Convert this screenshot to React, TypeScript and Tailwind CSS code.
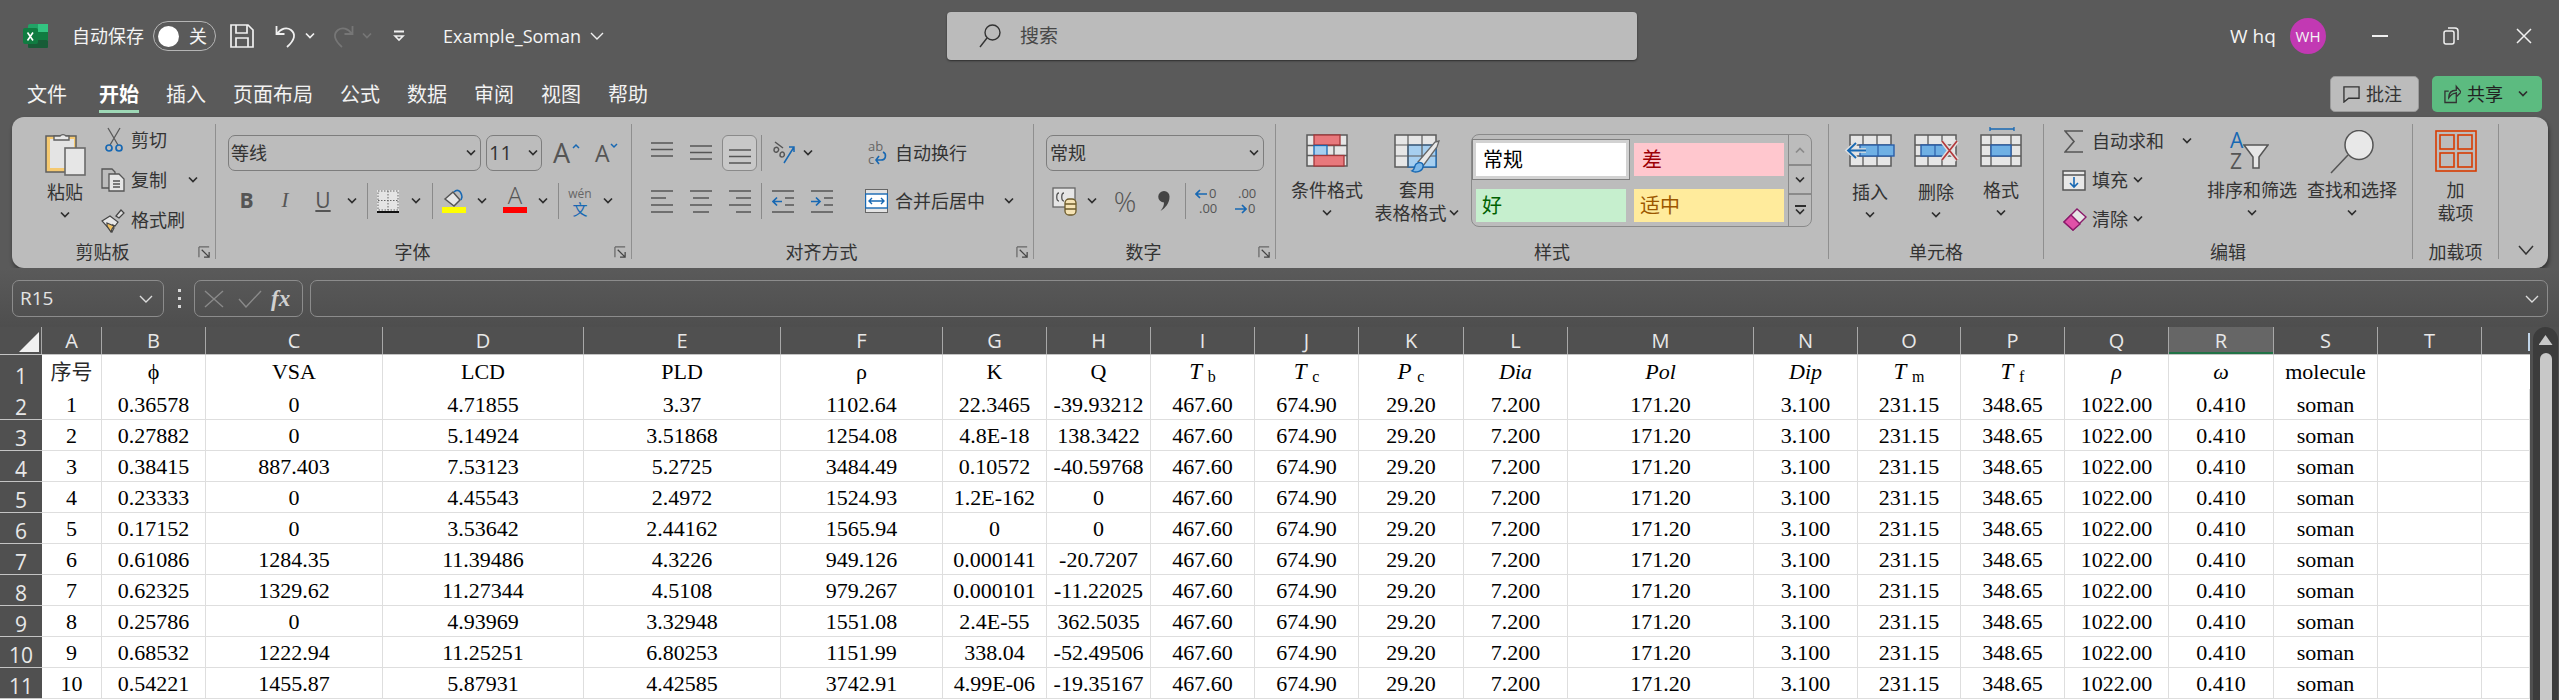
import type { ReactNode } from "react";

const cjk = "[font-family:'Noto_Sans','Noto_Sans_CJK_SC',sans-serif]";

const rows = [
  ["1", "0.36578", "0", "4.71855", "3.37", "1102.64", "22.3465", "-39.93212"],
  ["2", "0.27882", "0", "5.14924", "3.51868", "1254.08", "4.8E-18", "138.3422"],
  ["3", "0.38415", "887.403", "7.53123", "5.2725", "3484.49", "0.10572", "-40.59768"],
  ["4", "0.23333", "0", "4.45543", "2.4972", "1524.93", "1.2E-162", "0"],
  ["5", "0.17152", "0", "3.53642", "2.44162", "1565.94", "0", "0"],
  ["6", "0.61086", "1284.35", "11.39486", "4.3226", "949.126", "0.000141", "-20.7207"],
  ["7", "0.62325", "1329.62", "11.27344", "4.5108", "979.267", "0.000101", "-11.22025"],
  ["8", "0.25786", "0", "4.93969", "3.32948", "1551.08", "2.4E-55", "362.5035"],
  ["9", "0.68532", "1222.94", "11.25251", "6.80253", "1151.99", "338.04", "-52.49506"],
  ["10", "0.54221", "1455.87", "5.87931", "4.42585", "3742.91", "4.99E-06", "-19.35167"],
];
const fixedTail = ["467.60", "674.90", "29.20", "7.200", "171.20", "3.100", "231.15", "348.65", "1022.00", "0.410", "soman", "", ""];
const letters = "ABCDEFGHIJKLMNOPQRST".split("");

const gridCols =
  "grid grid-cols-[42px_60px_104px_177px_201px_197px_162px_104px_104px_104px_104px_105px_104px_186px_104px_103px_104px_104px_105px_104px_104px_48px]";

function Chev({ className = "" }: { className?: string }) {
  return (
    <svg viewBox="0 0 12 8" className={`w-[12px] h-[8px] shrink-0 ${className}`} fill="none" stroke="#2e2e2e" strokeWidth="1.7">
      <path d="M2 1.5 6 5.5 10 1.5" />
    </svg>
  );
}

function Sep({ className = "" }: { className?: string }) {
  return <div className={`w-px h-[36px] bg-[#8a8a8a] shrink-0 ${className}`} />;
}

function Group({ w, label, expander, children }: { w: string; label: string; expander?: boolean; children: ReactNode }) {
  return (
    <div className={`${w} h-[135px] border-r border-[#8f8f8f] flex flex-col shrink-0`}>
      <div className="h-[121px] flex">{children}</div>
      <div className="h-[14px] flex items-center">
        <span className="flex-1 text-center text-[18px] leading-[14px] text-[#333] whitespace-nowrap">{label}</span>
        {expander && (
          <span className="w-[22px] flex justify-center">
            <svg viewBox="0 0 14 14" className="w-[13px] h-[13px]" fill="none" stroke="#444" strokeWidth="1.3">
              <path d="M1 1h11M1 1v11" stroke="#666" />
              <path d="M4 4l8 8M12 6.5V12H6.5" />
            </svg>
          </span>
        )}
      </div>
    </div>
  );
}

function SmallBtn({ icon, label, chev }: { icon: ReactNode; label: string; chev?: string }) {
  return (
    <div className="h-[32px] flex items-center">
      <div className="w-[30px] flex">{icon}</div>
      <span className="text-[18px] text-[#333] whitespace-nowrap">{label}</span>
      {chev && <Chev className={chev} />}
    </div>
  );
}

function BigBtn({ w, slot, icon, line1, line2 }: { w: string; slot: string; icon: ReactNode; line1: string; line2?: ReactNode }) {
  return (
    <div className={`${w} shrink-0 flex flex-col items-center`}>
      <div className={`${slot} flex justify-center items-start`}>{icon}</div>
      <div className="h-[24px] leading-[24px] text-[18px] text-[#333] whitespace-nowrap">{line1}</div>
      <div className="h-[22px] flex items-center justify-center text-[18px] text-[#333] whitespace-nowrap">
        {line2 ? line2 : <Chev />}
      </div>
    </div>
  );
}

function TableGrid({ children }: { children?: ReactNode }) {
  return (
    <svg viewBox="0 0 42 33" width={42} height={33} className="shrink-0 overflow-visible">
      <rect x="1" y="1" width="40" height="31" fill="#e6e6e6" stroke="#5a5a5a" strokeWidth="1.5" />
      <path d="M15 1v31M28 1v31M1 11.5h40M1 21.5h40" stroke="#5a5a5a" strokeWidth="1.3" />
      {children}
    </svg>
  );
}

function AlignIcon({ kind }: { kind: string }) {
  const paths: Record<string, string> = {
    top: "M0 2h22M0 8.5h22M0 15h22",
    mid: "M0 5h22M0 11.5h22M0 18h22",
    bot: "M0 9h22M0 15.5h22M0 22h22",
    left: "M0 2h22M0 9h15M0 16h22M0 23h22",
    center: "M0 2h22M3 9h16M0 16h22M3 23h16",
    right: "M0 2h22M7 9h15M0 16h22M7 23h15",
  };
  return (
    <svg viewBox="0 0 22 25" className="w-[22px] h-[25px] shrink-0" fill="none" stroke="#555" strokeWidth="1.7">
      <path d={paths[kind]} />
    </svg>
  );
}

function IndentIcon({ dir }: { dir: "in" | "out" }) {
  return (
    <svg viewBox="0 0 22 25" className="w-[22px] h-[25px] shrink-0" fill="none" strokeWidth="1.7">
      <path d="M0 2h22M0 23h22M13 9h9M13 16h9" stroke="#555" />
      <path d={dir === "out" ? "M10 12.5H1M5 8.5l-4 4 4 4" : "M0 12.5h9M5 8.5l4 4-4 4"} stroke="#1768b3" />
    </svg>
  );
}

function Sub({ a, b }: { a: string; b: string }) {
  return (
    <div className="border-r border-b border-[#dedede] whitespace-nowrap text-[23px]">
      <i>{a}</i> <span className="text-[16px] align-[-3px]">{b}</span>
    </div>
  );
}

export default function App() {
  return (
    <div className={`w-[2559px] h-[700px] overflow-hidden flex flex-col bg-[#5a5a5a] ${cjk}`}>
      {/* title bar */}
      <div className="h-[72px] flex items-center shrink-0 text-[#f4f4f4] text-[18px]">
        <svg viewBox="0 0 25 24" className="w-[25px] h-[24px] ml-[23px] shrink-0">
          <rect x="5" y="0" width="20" height="24" rx="2" fill="#21a366" />
          <rect x="15" y="0" width="10" height="8" fill="#33c481" />
          <rect x="15" y="8" width="10" height="8" fill="#107c41" />
          <rect x="5" y="16" width="20" height="8" rx="1" fill="#185c37" />
          <rect x="0" y="4" width="15" height="16" rx="2" fill="#107c41" />
          <path d="M4.5 8.5l5.5 8M10 8.5l-5.5 8" stroke="#fff" strokeWidth="1.6" />
        </svg>
        <span className="ml-[24px] w-[81px] whitespace-nowrap">自动保存</span>
        <div className="w-[63px] h-[30px] rounded-full border border-[#b5b5b5] flex items-center pl-[4px]">
          <div className="w-[21px] h-[21px] rounded-full bg-white" />
          <span className="ml-[10px]">关</span>
        </div>
        <svg viewBox="0 0 24 24" className="ml-[14px] w-[24px] h-[24px] shrink-0" fill="none" stroke="#f0f0f0" strokeWidth="1.7">
          <path d="M1 1h17l5 5v17H1zM6 1v8h11V1M6 23v-9h12v9" />
        </svg>
        <svg viewBox="0 0 22 24" className="ml-[21px] w-[22px] h-[24px] shrink-0" fill="none" stroke="#f0f0f0" strokeWidth="1.8">
          <path d="M1.5 2v8h8M2 10C6 4 12 3 16 6c5 4 4 10-4 17" />
        </svg>
        <Chev className="ml-[7px] [&>path]:stroke-[#f0f0f0]" />
        <svg viewBox="0 0 22 24" className="ml-[16px] w-[22px] h-[24px] shrink-0" fill="none" stroke="#767676" strokeWidth="1.8">
          <path d="M20.5 2v8h-8M20 10C16 4 10 3 6 6c-5 4-4 10 4 17" />
        </svg>
        <Chev className="ml-[7px] [&>path]:stroke-[#767676]" />
        <svg viewBox="0 0 12 12" className="ml-[20px] w-[12px] h-[12px] shrink-0" fill="none" stroke="#f0f0f0" strokeWidth="1.6">
          <path d="M1 1.5h10" strokeWidth="2" />
          <path d="M2 6l4 4 4-4z" />
        </svg>
        <span className="ml-[38px] w-[147px] text-[18px] whitespace-nowrap [font-family:'Open_Sans',sans-serif]">Example_Soman</span>
        <svg viewBox="0 0 14 8" className="w-[14px] h-[8px] shrink-0" fill="none" stroke="#f0f0f0" strokeWidth="1.4">
          <path d="M1 1l6 6 6-6" />
        </svg>
        {/* search */}
        <div className="ml-[343px] w-[690px] h-[48px] rounded-[4px] bg-[#bbbbbb] shadow-[0_1px_2px_rgba(0,0,0,0.5)] flex items-center pl-[32px] text-[#484848] text-[19px]">
          <svg viewBox="0 0 22 24" className="w-[22px] h-[24px] shrink-0" fill="none" stroke="#333" strokeWidth="1.4">
            <circle cx="13.5" cy="8.5" r="7.5" />
            <path d="M8 14 1 23" />
          </svg>
          <span className="ml-[19px]">搜索</span>
        </div>
        <span className="ml-[593px] w-[60px] whitespace-nowrap text-[19px] [font-family:'Open_Sans',sans-serif]">W hq</span>
        <div className="w-[36px] h-[36px] rounded-full bg-[#c239b3] flex items-center justify-center text-[15px] text-[#f5f5f5] [font-family:'Open_Sans',sans-serif]">WH</div>
        <div className="ml-[46px] w-[16px] h-[2px] bg-[#f0f0f0]" />
        <svg viewBox="0 0 16 18" className="ml-[55px] w-[16px] h-[18px] shrink-0" fill="none" stroke="#f0f0f0" strokeWidth="1.5">
          <rect x="1" y="4" width="10" height="13" rx="2" />
          <path d="M5 1h7a3 3 0 0 1 3 3v9" />
        </svg>
        <svg viewBox="0 0 16 16" className="ml-[57px] w-[16px] h-[16px] shrink-0" fill="none" stroke="#f0f0f0" strokeWidth="1.5">
          <path d="M1 1l14 14M15 1 1 15" />
        </svg>
      </div>

      {/* tabs */}
      <div className="h-[45px] shrink-0 flex text-[#f2f2f2] text-[20px]">
        <div className="flex items-start pl-[27px] gap-[27px] pt-[9px] leading-[28px] whitespace-nowrap">
          <span>文件</span>
          <span className="ml-[5px] h-[29px] font-bold border-b-[3px] border-[#9ed8b6] text-white box-content">开始</span>
          <span>插入</span>
          <span>页面布局</span>
          <span>公式</span>
          <span>数据</span>
          <span>审阅</span>
          <span>视图</span>
          <span>帮助</span>
        </div>
        <div className="ml-auto flex items-start pt-[4px] pr-[17px] gap-[13px] text-[18px] text-[#333]">
          <div className="w-[89px] h-[36px] rounded-[5px] bg-[#bcbcbc] border border-[#9a9a9a] flex items-center pl-[12px]">
            <svg viewBox="0 0 18 18" className="w-[17px] h-[17px] shrink-0" fill="none" stroke="#333" strokeWidth="1.4">
              <path d="M1 1h16v12H6l-5 4z" />
            </svg>
            <span className="ml-[6px]">批注</span>
          </div>
          <div className="w-[110px] h-[36px] rounded-[5px] bg-[#5cbb80] flex items-center pl-[12px] text-[#222]">
            <svg viewBox="0 0 18 20" className="w-[17px] h-[20px] shrink-0" fill="none" stroke="#333" strokeWidth="1.4">
              <path d="M13 8v11H1V7h4M5 14c0-5 3-8 8-8V2l5 6-5 5V9c-4 0-6 2-8 5z" />
            </svg>
            <span className="ml-[6px]">共享</span>
            <Chev className="ml-[14px]" />
          </div>
        </div>
      </div>

      {/* ribbon */}
      <div className="ml-[12px] w-[2536px] h-[151px] shrink-0 rounded-[12px] bg-[#bcbcbc] shadow-[1px_3px_4px_rgba(0,0,0,0.45)] flex py-[7px]">
        <Group w="w-[204px]" label="剪贴板" expander>
          <div className="ml-[31px] w-[44px] flex flex-col items-center pt-[6px]">
            <svg viewBox="0 0 42 46" className="w-[42px] h-[46px] shrink-0">
              <rect x="2" y="6" width="30" height="36" fill="#f5c970" stroke="#5e5e5e" strokeWidth="1.5" />
              <rect x="6" y="9" width="24" height="29" fill="#e4e4e4" />
              <path d="M10 10V6h6a4 4 0 0 1 6 0h3v4z" fill="#e8e8e8" stroke="#5e5e5e" strokeWidth="1.4" />
              <rect x="21" y="18" width="20" height="27" fill="#e6e6e6" stroke="#6a6a6a" strokeWidth="1.6" />
            </svg>
            <span className="mt-[4px] h-[24px] leading-[24px] text-[18px] text-[#333] whitespace-nowrap">粘贴</span>
            <Chev className="mt-[7px]" />
          </div>
          <div className="ml-[14px] flex flex-col gap-[8px]">
            <SmallBtn
              label="剪切"
              icon={
                <svg viewBox="0 0 18 26" className="ml-[4px] w-[18px] h-[26px]" fill="none">
                  <path d="M3 1l10 17M15 1 5 18" stroke="#5a5a5a" strokeWidth="1.3" />
                  <circle cx="4" cy="21" r="3" stroke="#1768b3" strokeWidth="1.7" />
                  <circle cx="14" cy="21" r="3" stroke="#1768b3" strokeWidth="1.7" />
                </svg>
              }
            />
            <SmallBtn
              label="复制"
              chev="ml-[20px]"
              icon={
                <svg viewBox="0 0 24 24" className="w-[24px] h-[24px]" fill="#e6e6e6" stroke="#555" strokeWidth="1.3">
                  <path d="M1 1h10l3 3v16H1z" fill="none" />
                  <path d="M8 6h10l5 5v12H8z" />
                  <path d="M12 13h7M12 16h7M12 19h7" />
                </svg>
              }
            />
            <SmallBtn
              label="格式刷"
              icon={
                <svg viewBox="0 0 24 25" className="w-[24px] h-[25px]" stroke="#444" strokeWidth="1.2">
                  <path d="M15 8l5-6 3 3-5 5z" fill="#ddd" />
                  <path d="M1 13l8-5 8 6-3 4-2-1 1 3-2 4z" fill="#e6e6e6" />
                  <path d="M6 15l7 3-2 3-1 3-4-6z" fill="#f0c060" />
                </svg>
              }
            />
          </div>
        </Group>

        <Group w="w-[416px]" label="字体" expander>
          <div className="ml-[12px] flex flex-col pt-[11px]">
            <div className="h-[36px] flex items-center">
              <div className="w-[253px] h-[36px] rounded-[7px] border border-[#7d7d7d] flex items-center pl-[2px] pr-[3px] justify-between text-[18px] text-[#333]">
                <span>等线</span>
                <Chev />
              </div>
              <div className="ml-[5px] w-[56px] h-[36px] rounded-[7px] border border-[#7d7d7d] flex items-center pl-[2px] pr-[2px] justify-between text-[20px] text-[#333]">
                <span className="[font-family:'Open_Sans',sans-serif]">11</span>
                <Chev />
              </div>
              <span className="ml-[11px] w-[22px] h-[36px] flex items-center text-[#555] text-[27px] leading-[36px] [font-family:'Open_Sans',sans-serif]">A</span>
              <svg viewBox="0 0 8 6" className="w-[8px] h-[6px] -ml-[3px] mb-[14px]" fill="none" stroke="#1768b3" strokeWidth="1.5"><path d="M1 5l3-3 3 3" /></svg>
              <span className="ml-[15px] w-[14px] h-[36px] flex items-center text-[#555] text-[23px] leading-[36px] [font-family:'Open_Sans',sans-serif]">A</span>
              <svg viewBox="0 0 8 6" className="w-[8px] h-[6px] ml-[1px] mb-[14px]" fill="none" stroke="#1768b3" strokeWidth="1.5"><path d="M1 1l3 3 3-3" /></svg>
            </div>
            <div className="mt-[12px] h-[36px] flex items-center text-[#555]">
              <span className="w-[37px] text-center text-[21px] font-bold [font-family:'Open_Sans',sans-serif]">B</span>
              <span className="w-[40px] text-center text-[21px] italic [font-family:'Liberation_Serif',serif]">I</span>
              <span className="w-[36px] text-center text-[21px] underline [font-family:'Open_Sans',sans-serif]">U</span>
              <div className="w-[22px] flex justify-center"><Chev /></div>
              <Sep className="ml-[4px]" />
              <svg viewBox="0 0 22 23" className="ml-[9px] w-[22px] h-[23px] shrink-0" fill="#e4e4e4">
                <rect x="0" y="0" width="22" height="23" />
                <path d="M1 1h20v19H1zM11 1v19M1 10.5h20" fill="none" stroke="#666" strokeWidth="1" strokeDasharray="1.5 1.5" />
                <path d="M0 22h22" stroke="#111" strokeWidth="2" />
              </svg>
              <div className="w-[33px] flex justify-center"><Chev /></div>
              <Sep />
              <div className="ml-[9px] w-[24px] flex flex-col items-center shrink-0">
                <svg viewBox="0 0 24 18" className="w-[24px] h-[18px]" fill="none" strokeWidth="1.5">
                  <path d="M3 10l8-7 7 8-6 6z" fill="#e6e6e6" stroke="#555" />
                  <path d="M12 3c3-3 7-2 8 5l-1 3" stroke="#1768b3" />
                </svg>
                <div className="w-[24px] h-[6px] bg-[#ffff00]" />
              </div>
              <div className="w-[32px] flex justify-center"><Chev /></div>
              <div className="ml-[5px] w-[24px] flex flex-col items-center shrink-0">
                <span className="h-[24px] text-[24px] leading-[24px] -mt-[6px] text-[#555] [font-family:'Open_Sans',sans-serif] font-light">A</span>
                <div className="w-[24px] h-[6px] bg-[#ff0000]" />
              </div>
              <div className="w-[31px] flex justify-center"><Chev /></div>
              <Sep />
              <div className="ml-[10px] w-[22px] flex flex-col items-center shrink-0">
                <span className="h-[15px] text-[12px] leading-[15px] text-[#666] [font-family:'Open_Sans',sans-serif]">wén</span>
                <span className="h-[16px] text-[15px] leading-[16px] text-[#1768b3]">文</span>
              </div>
              <div className="w-[34px] flex justify-center"><Chev /></div>
            </div>
          </div>
        </Group>

        <Group w="w-[402px]" label="对齐方式" expander>
          <div className="w-[233px] flex flex-col pt-[11px] shrink-0">
            <div className="h-[36px] flex items-center">
              <div className="ml-[19px]"><AlignIcon kind="top" /></div>
              <div className="ml-[17px]"><AlignIcon kind="mid" /></div>
              <div className="ml-[10px] w-[35px] h-[36px] rounded-[6px] border border-[#8a8a8a] bg-[#c8c8c8] flex items-center justify-center shrink-0">
                <AlignIcon kind="bot" />
              </div>
              <Sep className="ml-[4px]" />
              <svg viewBox="0 0 24 28" className="ml-[10px] w-[24px] h-[28px] shrink-0" fill="none" strokeWidth="1.5">
                <path d="M12 24 22 8M17 8h5v5" stroke="#1768b3" />
                <path d="M3 3l8 6M2 11c0-3 3-3 4-2s1 3-1 4-3-1-3-2zM8 16c0-3 3-4 4-2s0 4-2 4-2-1-2-2z" stroke="#555" />
              </svg>
              <Chev className="ml-[6px]" />
            </div>
            <div className="mt-[12px] h-[36px] flex items-center">
              <div className="ml-[19px]"><AlignIcon kind="left" /></div>
              <div className="ml-[17px]"><AlignIcon kind="center" /></div>
              <div className="ml-[17px]"><AlignIcon kind="right" /></div>
              <Sep className="ml-[10px]" />
              <div className="ml-[10px]"><IndentIcon dir="out" /></div>
              <div className="ml-[17px]"><IndentIcon dir="in" /></div>
            </div>
          </div>
          <div className="flex flex-col pt-[11px]">
            <div className="h-[36px] flex items-center">
              <div className="w-[30px] flex pl-[3px] items-center">
                <div className="flex flex-col text-[13px] text-[#666] [font-family:'Open_Sans',sans-serif]">
                  <span className="h-[13px] leading-[13px]">ab</span>
                  <span className="h-[13px] leading-[13px]">c</span>
                </div>
                <svg viewBox="0 0 12 14" className="-ml-[8px] mt-[10px] w-[12px] h-[14px]" fill="none" stroke="#1768b3" strokeWidth="1.6">
                  <path d="M8 1c4 2 3 8-2 8H1M4 5 1 9l3 4" />
                </svg>
              </div>
              <span className="text-[18px] text-[#333] whitespace-nowrap">自动换行</span>
            </div>
            <div className="mt-[12px] h-[36px] flex items-center">
              <div className="w-[30px] flex">
                <svg viewBox="0 0 23 24" className="w-[23px] h-[24px]">
                  <rect x="0.5" y="0.5" width="22" height="23" fill="#e4e4e4" stroke="#666" />
                  <rect x="0.5" y="5" width="22" height="14" fill="#fff" stroke="#1768b3" strokeWidth="1.4" />
                  <path d="M4 12h15M7 9l-3 3 3 3M16 9l3 3-3 3" fill="none" stroke="#1768b3" strokeWidth="1.4" />
                </svg>
              </div>
              <span className="text-[18px] text-[#333] whitespace-nowrap">合并后居中</span>
              <Chev className="ml-[18px]" />
            </div>
          </div>
        </Group>

        <Group w="w-[242px]" label="数字" expander>
          <div className="ml-[12px] flex flex-col pt-[11px]">
            <div className="w-[218px] h-[36px] rounded-[7px] border border-[#7d7d7d] flex items-center pl-[3px] pr-[3px] justify-between text-[18px] text-[#333]">
              <span>常规</span>
              <Chev />
            </div>
            <div className="mt-[12px] h-[36px] flex items-center text-[#555]">
              <svg viewBox="0 0 25 30" className="ml-[6px] w-[25px] h-[30px] shrink-0" fill="none">
                <rect x="1" y="2" width="22" height="19" fill="#e6e6e6" stroke="#666" strokeWidth="1.3" />
                <path d="M7 7c-3 0-3 8 0 8M12 7c-3 0-3 8 0 8" stroke="#555" strokeWidth="1.3" />
                <rect x="13" y="13" width="11" height="16" rx="4" fill="#f5e3b5" stroke="#6b5a2a" strokeWidth="1.3" />
                <path d="M13 18h11M13 23h11" stroke="#6b5a2a" strokeWidth="1.3" />
              </svg>
              <Chev className="ml-[9px]" />
              <span className="ml-[13px] w-[28px] text-center text-[28px] leading-[36px] [font-family:'Open_Sans',sans-serif] font-light">%</span>
              <svg viewBox="0 0 12 20" className="ml-[19px] w-[12px] h-[20px] shrink-0" fill="#444">
                <path d="M6 0a5.5 5.5 0 0 1 5.5 6c0 6-4 11-9 14 2.500-3 3.500-5.500 3.500-8.500A5.500 5.500 0 0 1 6 0z" />
              </svg>
              <Sep className="ml-[15px]" />
              <div className="ml-[9px] w-[24px] flex flex-col shrink-0 text-[13px] [font-family:'Open_Sans',sans-serif]">
                <div className="h-[15px] leading-[15px] flex items-center">
                  <svg viewBox="0 0 13 10" className="w-[13px] h-[10px] shrink-0" fill="none" stroke="#1768b3" strokeWidth="1.7"><path d="M12 5H2M5 1 1 5l4 4" /></svg>
                  <span className="ml-[1px]">0</span>
                </div>
                <div className="h-[15px] leading-[15px] pl-[4px]">.00</div>
              </div>
              <div className="ml-[15px] w-[24px] flex flex-col shrink-0 text-[13px] [font-family:'Open_Sans',sans-serif]">
                <div className="h-[15px] leading-[15px] pl-[4px]">.00</div>
                <div className="h-[15px] leading-[15px] flex items-center">
                  <svg viewBox="0 0 13 10" className="w-[13px] h-[10px] shrink-0" fill="none" stroke="#1768b3" strokeWidth="1.7"><path d="M1 5h10M8 1l4 4-4 4" /></svg>
                  <span className="ml-[1px]">0</span>
                </div>
              </div>
            </div>
          </div>
        </Group>

        <Group w="w-[553px]" label="样式">
          <div className="ml-[11px] flex pt-[10px]">
            <BigBtn
              w="w-[80px]"
              slot="h-[44px]"
              line1="条件格式"
              icon={
                <TableGrid>
                  <rect x="8" y="1" width="26" height="10" fill="#e8787c" stroke="#a4373a" strokeWidth="1.3" />
                  <rect x="8" y="11.5" width="13" height="10" fill="#a6cff0" stroke="#1768b3" strokeWidth="1.3" />
                  <rect x="8" y="21.5" width="30" height="10.5" fill="#e8787c" stroke="#a4373a" strokeWidth="1.3" />
                </TableGrid>
              }
            />
            <BigBtn
              w="w-[94px] ml-[3px]"
              slot="h-[44px]"
              line1="套用"
              line2={
                <>
                  表格格式
                  <Chev className="ml-px" />
                </>
              }
              icon={
                <svg viewBox="0 0 46 42" className="w-[46px] h-[42px] shrink-0 overflow-visible">
                  <rect x="1" y="1" width="41" height="32" fill="#e6e6e6" stroke="#5a5a5a" strokeWidth="1.5" />
                  <rect x="14" y="11" width="28" height="22" fill="#a6cff0" stroke="#1768b3" strokeWidth="1.3" />
                  <path d="M14 1v32M28 1v32M1 11h41M1 22h41" stroke="#5a5a5a" strokeWidth="1.2" />
                  <path d="M24 28 41 8l4-1-2 6-14 19z" fill="#e8e8e8" stroke="#666" strokeWidth="1.3" />
                  <path d="M22 30c4-3 8-1 7 3-1 5-8 6-11 4 3-1 2-5 4-7z" fill="#7db8e8" stroke="#1768b3" strokeWidth="1.4" />
                </svg>
              }
            />
          </div>
          <div className="ml-[7px] mt-[10px] w-[341px] h-[93px] rounded-[8px] border border-[#8a8a8a] flex shrink-0">
            <div className="w-[313px] grid grid-cols-[150px_150px] gap-x-[8px] gap-y-[8px] pl-[4px] pt-[8px] text-[20px] leading-[33px] shrink-0">
              <div className="h-[33px] pl-[7px] bg-white text-black shadow-[0_0_0_3px_#d2d2d2,0_0_0_4px_#808080]">常规</div>
              <div className="h-[33px] pl-[8px] bg-[#ffc7ce] text-[#9c0006]">差</div>
              <div className="h-[33px] pl-[6px] bg-[#c6efce] text-[#006100]">好</div>
              <div className="h-[33px] pl-[6px] bg-[#ffeb9c] text-[#9c5700]">适中</div>
            </div>
            <div className="ml-auto w-[23px] flex flex-col border-l border-[#8a8a8a]">
              <div className="h-[31px] border-b-2 border-[#8a8a8a] flex items-center justify-center">
                <Chev className="rotate-180 [&>path]:stroke-[#8a8a8a]" />
              </div>
              <div className="h-[29px] border-b-2 border-[#8a8a8a] flex items-center justify-center">
                <Chev />
              </div>
              <div className="flex-1 flex flex-col items-center justify-center">
                <div className="w-[11px] h-[2px] bg-[#2e2e2e] mb-[1px]" />
                <Chev />
              </div>
            </div>
          </div>
        </Group>

        <Group w="w-[215px]" label="单元格">
          <div className="ml-[11px] flex pt-[10px]">
            <BigBtn
              w="w-[60px]"
              slot="h-[46px]"
              line1="插入"
              icon={
                <svg viewBox="0 0 48 33" className="w-[48px] h-[33px] shrink-0 overflow-visible">
                  <rect x="4" y="1" width="41" height="31" fill="#e6e6e6" stroke="#5a5a5a" strokeWidth="1.5" />
                  <path d="M17 1v31M31 1v31M4 11h41M4 22h41" stroke="#5a5a5a" strokeWidth="1.3" />
                  <rect x="14" y="11" width="34" height="11" fill="#6fb0e4" stroke="#2a5ea8" strokeWidth="1.4" />
                  <path d="M32 11v11" stroke="#2a5ea8" strokeWidth="1.2" />
                  <path d="M20 16.500H2M10 9l-8 7.500 8 7.500" fill="none" stroke="#e0e0e0" strokeWidth="4.500" />
                  <path d="M20 16.500H2M10 9l-8 7.500 8 7.500" fill="none" stroke="#1768b3" strokeWidth="1.800" />
                </svg>
              }
            />
            <BigBtn
              w="w-[60px] ml-[6px]"
              slot="h-[46px]"
              line1="删除"
              icon={
                <svg viewBox="0 0 45 33" className="w-[45px] h-[33px] shrink-0 overflow-visible">
                  <rect x="1" y="1" width="41" height="31" fill="#e6e6e6" stroke="#5a5a5a" strokeWidth="1.5" />
                  <path d="M14 1v31M28 1v31M1 11h41M1 22h41" stroke="#5a5a5a" strokeWidth="1.3" />
                  <path d="M7 11h22l6 5.500-6 5.500H7z" fill="#6fb0e4" stroke="#2a5ea8" strokeWidth="1.4" />
                  <path d="M21 11v11" stroke="#2a5ea8" strokeWidth="1.2" />
                  <path d="M28 7l15 19M43 7 28 26" stroke="#e0e0e0" strokeWidth="4.500" />
                  <path d="M28 7l15 19M43 7 28 26" stroke="#b3393c" strokeWidth="1.700" />
                </svg>
              }
            />
            <div className="ml-[5px] -mt-[7px]">
              <BigBtn
                w="w-[60px]"
                slot="h-[51px]"
                line1="格式"
                icon={
                  <svg viewBox="0 0 42 40" className="w-[42px] h-[40px] shrink-0">
                    <path d="M10 2h24M10 0v4M34 0v4" stroke="#1768b3" strokeWidth="1.3" />
                    <rect x="1" y="8" width="40" height="31" fill="#e6e6e6" stroke="#5a5a5a" strokeWidth="1.5" />
                    <path d="M11 8v31M31 8v31M1 18h40M1 29h40" stroke="#5a5a5a" strokeWidth="1.3" />
                    <rect x="11" y="18" width="20" height="11" fill="#6fb0e4" stroke="#2a5ea8" strokeWidth="1.4" />
                  </svg>
                }
              />
            </div>
          </div>
        </Group>

        <Group w="w-[369px]" label="编辑">
          <div className="ml-[18px] w-[143px] flex flex-col pt-px gap-[7px] shrink-0">
            <SmallBtn
              label="自动求和"
              chev="ml-[17px]"
              icon={
                <svg viewBox="0 0 20 23" className="ml-[2px] w-[20px] h-[23px]" fill="none" stroke="#555" strokeWidth="1.6">
                  <path d="M19 1H1l9 10.500L1 22h18" />
                </svg>
              }
            />
            <SmallBtn
              label="填充"
              chev="ml-[4px]"
              icon={
                <svg viewBox="0 0 24 21" className="w-[24px] h-[21px]" fill="#e8e8e8" stroke="#555" strokeWidth="1.5">
                  <rect x="1" y="1" width="22" height="19" />
                  <path d="M1 5h22" />
                  <path d="M12 7v10M8 13l4 4 4-4" fill="none" stroke="#1768b3" strokeWidth="1.6" />
                </svg>
              }
            />
            <SmallBtn
              label="清除"
              chev="ml-[4px]"
              icon={
                <svg viewBox="0 0 24 24" className="ml-px w-[24px] h-[24px]" stroke="#8a1a6a" strokeWidth="1.4">
                  <path d="M1 15 14 2l9 8L10 23z" fill="#e6e6e6" />
                  <path d="M1 15l7-7 9 9-7 6z" fill="#e050a8" />
                </svg>
              }
            />
          </div>
          <BigBtn
            w="w-[94px] mt-[6px]"
            slot="h-[48px]"
            line1="排序和筛选"
            icon={
              <div className="flex w-[44px] h-[44px]">
                <div className="flex flex-col text-[21px] [font-family:'Open_Sans',sans-serif]">
                  <span className="h-[21px] leading-[21px] text-[#1768b3]">A</span>
                  <span className="h-[21px] leading-[21px] text-[#555]">Z</span>
                </div>
                <svg viewBox="0 0 26 26" className="mt-[14px] w-[26px] h-[26px] shrink-0" fill="#e6e6e6" stroke="#555" strokeWidth="1.5">
                  <path d="M1 1h24L16 13v11h-6V13z" />
                </svg>
              </div>
            }
          />
          <BigBtn
            w="w-[94px] ml-[6px] mt-[6px]"
            slot="h-[48px]"
            line1="查找和选择"
            icon={
              <svg viewBox="0 0 44 44" className="w-[44px] h-[44px] shrink-0" stroke="#555" strokeWidth="1.5">
                <ellipse cx="29" cy="15" rx="14" ry="14.500" fill="#e8e8e8" />
                <path d="M18 25 1 43" fill="none" />
              </svg>
            }
          />
        </Group>

        <Group w="w-[86px]" label="加载项">
          <div className="w-full pt-[6px]">
            <BigBtn
              w="w-full"
              slot="h-[48px]"
              line1="加"
              line2="载项"
              icon={
                <svg viewBox="0 0 42 42" className="w-[42px] h-[42px] shrink-0" fill="none" stroke="#d83b01" strokeWidth="1.6">
                  <rect x="1" y="1" width="40" height="40" />
                  <rect x="5" y="5" width="14" height="14" />
                  <rect x="23" y="5" width="14" height="14" />
                  <rect x="5" y="23" width="14" height="14" />
                  <rect x="23" y="23" width="14" height="14" />
                </svg>
              }
            />
          </div>
        </Group>

        <div className="flex-1 flex items-end pl-[19px] pb-[6px]">
          <svg viewBox="0 0 16 10" className="w-[16px] h-[10px]" fill="none" stroke="#333" strokeWidth="1.5">
            <path d="M1 1l7 8 7-8" />
          </svg>
        </div>
      </div>

      {/* formula bar */}
      <div className="h-[59px] shrink-0 bg-gradient-to-b from-[#5a5a5a] to-[#4e4e4e] flex items-start pt-[12px] pl-[12px] text-[#e4e4e4]">
        <div className="w-[152px] h-[37px] rounded-[7px] border border-[#8c8c8c] flex items-center pl-[7px] pr-[10px] justify-between text-[19px] [font-family:'Open_Sans',sans-serif]">
          <span>R15</span>
          <svg viewBox="0 0 14 8" className="w-[14px] h-[8px]" fill="none" stroke="#dcdcdc" strokeWidth="1.4"><path d="M1 1l6 6 6-6" /></svg>
        </div>
        <div className="ml-[13px] w-[4px] h-[37px] flex flex-col items-center justify-center gap-[5px]">
          <div className="w-[3px] h-[3px] bg-[#d8d8d8]" />
          <div className="w-[3px] h-[3px] bg-[#d8d8d8]" />
          <div className="w-[3px] h-[3px] bg-[#d8d8d8]" />
        </div>
        <div className="ml-[13px] w-[109px] h-[37px] rounded-[7px] border border-[#8c8c8c] flex items-center pl-[9px]">
          <svg viewBox="0 0 20 18" className="w-[20px] h-[18px]" fill="none" stroke="#8a8a8a" strokeWidth="1.4"><path d="M1 1l18 16M19 1 1 17" /></svg>
          <svg viewBox="0 0 24 18" className="ml-[14px] w-[24px] h-[18px]" fill="none" stroke="#8a8a8a" strokeWidth="1.4"><path d="M1 9l7 8L23 1" /></svg>
          <span className="ml-[9px] text-[23px] leading-[30px] italic font-bold text-[#d0d0d0] [font-family:'Liberation_Serif',serif]">fx</span>
        </div>
        <div className="ml-[7px] w-[2238px] h-[37px] rounded-[7px] border border-[#8c8c8c] flex items-center justify-end pr-[8px]">
          <svg viewBox="0 0 14 8" className="w-[14px] h-[8px]" fill="none" stroke="#dcdcdc" strokeWidth="1.4"><path d="M1 1l6 6 6-6" /></svg>
        </div>
      </div>

      {/* sheet */}
      <div className="flex flex-1 min-h-0 overflow-hidden">
        <div className="w-[2530px] shrink-0 flex flex-col">
          <div className={`${gridCols} h-[28px] shrink-0 bg-[#505050] border-b border-[#c4c4c4] text-[#e8e8e8] text-[20px] leading-[27px] text-center [font-family:'Open_Sans',sans-serif]`}>
            <div className="border-r border-[#a8a8a8] flex items-end justify-end pr-[2px] pb-[2px]">
              <div className="w-[20px] h-[20px] bg-[#f0f0f0] [clip-path:polygon(100%_0,100%_100%,0_100%)]" />
            </div>
            {letters.map((l) => (
              <div
                key={l}
                className={l === "R" ? "bg-[#666666] border-r border-[#a8a8a8] shadow-[inset_0_-2px_0_#217346]" : "border-r border-[#a8a8a8]"}
              >
                {l}
              </div>
            ))}
            <div className="flex justify-end"><div className="w-[2px] h-[18px] mt-[6px] bg-[#c0d4e8]" /></div>
          </div>

          <div className={`${gridCols} h-[34px] shrink-0 text-[22px] leading-[34px] text-center text-black bg-white [font-family:'Liberation_Serif','Noto_Sans_CJK_SC',serif]`}>
            <div className="bg-[#505050] border-b border-[#c4c4c4] text-[#e8e8e8] text-[21px] leading-[42px] overflow-hidden [font-family:'Open_Sans',sans-serif]">1</div>
            <div className="border-r border-b border-[#dedede] whitespace-nowrap text-[21px] text-[#2a2a2a]">序号</div>
            {["ϕ", "VSA", "LCD", "PLD", "ρ", "K", "Q"].map((t) => (
              <div key={t} className="border-r border-b border-[#dedede] whitespace-nowrap">{t}</div>
            ))}
            <Sub a="T" b="b" />
            <Sub a="T" b="c" />
            <Sub a="P" b="c" />
            <div className="border-r border-b border-[#dedede] italic">Dia</div>
            <div className="border-r border-b border-[#dedede] italic">Pol</div>
            <div className="border-r border-b border-[#dedede] italic">Dip</div>
            <Sub a="T" b="m" />
            <Sub a="T" b="f" />
            <div className="border-r border-b border-[#dedede] italic">ρ</div>
            <div className="border-r border-b border-[#dedede] italic">ω</div>
            <div className="border-r border-b border-[#dedede]">molecule</div>
            <div className="border-r border-b border-[#dedede]" />
            <div className="border-b border-[#dedede]" />
          </div>

          {rows.map((r, i) => (
            <div key={i} className={`${gridCols} h-[31px] shrink-0 text-[22px] leading-[32px] text-center text-black bg-white [font-family:'Liberation_Serif',serif]`}>
              <div className="bg-[#505050] border-b border-[#c4c4c4] text-[#e8e8e8] text-[21px] leading-[36px] overflow-hidden [font-family:'Open_Sans',sans-serif]">{i + 2}</div>
              {[...r, ...fixedTail].map((v, j) => (
                <div key={j} className="border-r border-b border-[#dedede] overflow-hidden whitespace-nowrap">{v}</div>
              ))}
            </div>
          ))}
          <div className="h-[2px] shrink-0 bg-white" />
        </div>

        {/* scrollbar */}
        <div className="flex-1 bg-[#505050] pl-[3px] pr-px">
          <div className="h-full rounded-t-[13px] bg-[#3c3c3c] flex flex-col items-center pt-[8px]">
            <div className="w-[14px] h-[10px] bg-[#c8c8c8] [clip-path:polygon(50%_0,100%_100%,0_100%)]" />
            <div className="mt-[8px] w-[12px] flex-1 rounded-t-full bg-[#c8c8c8]" />
          </div>
        </div>
      </div>
    </div>
  );
}
